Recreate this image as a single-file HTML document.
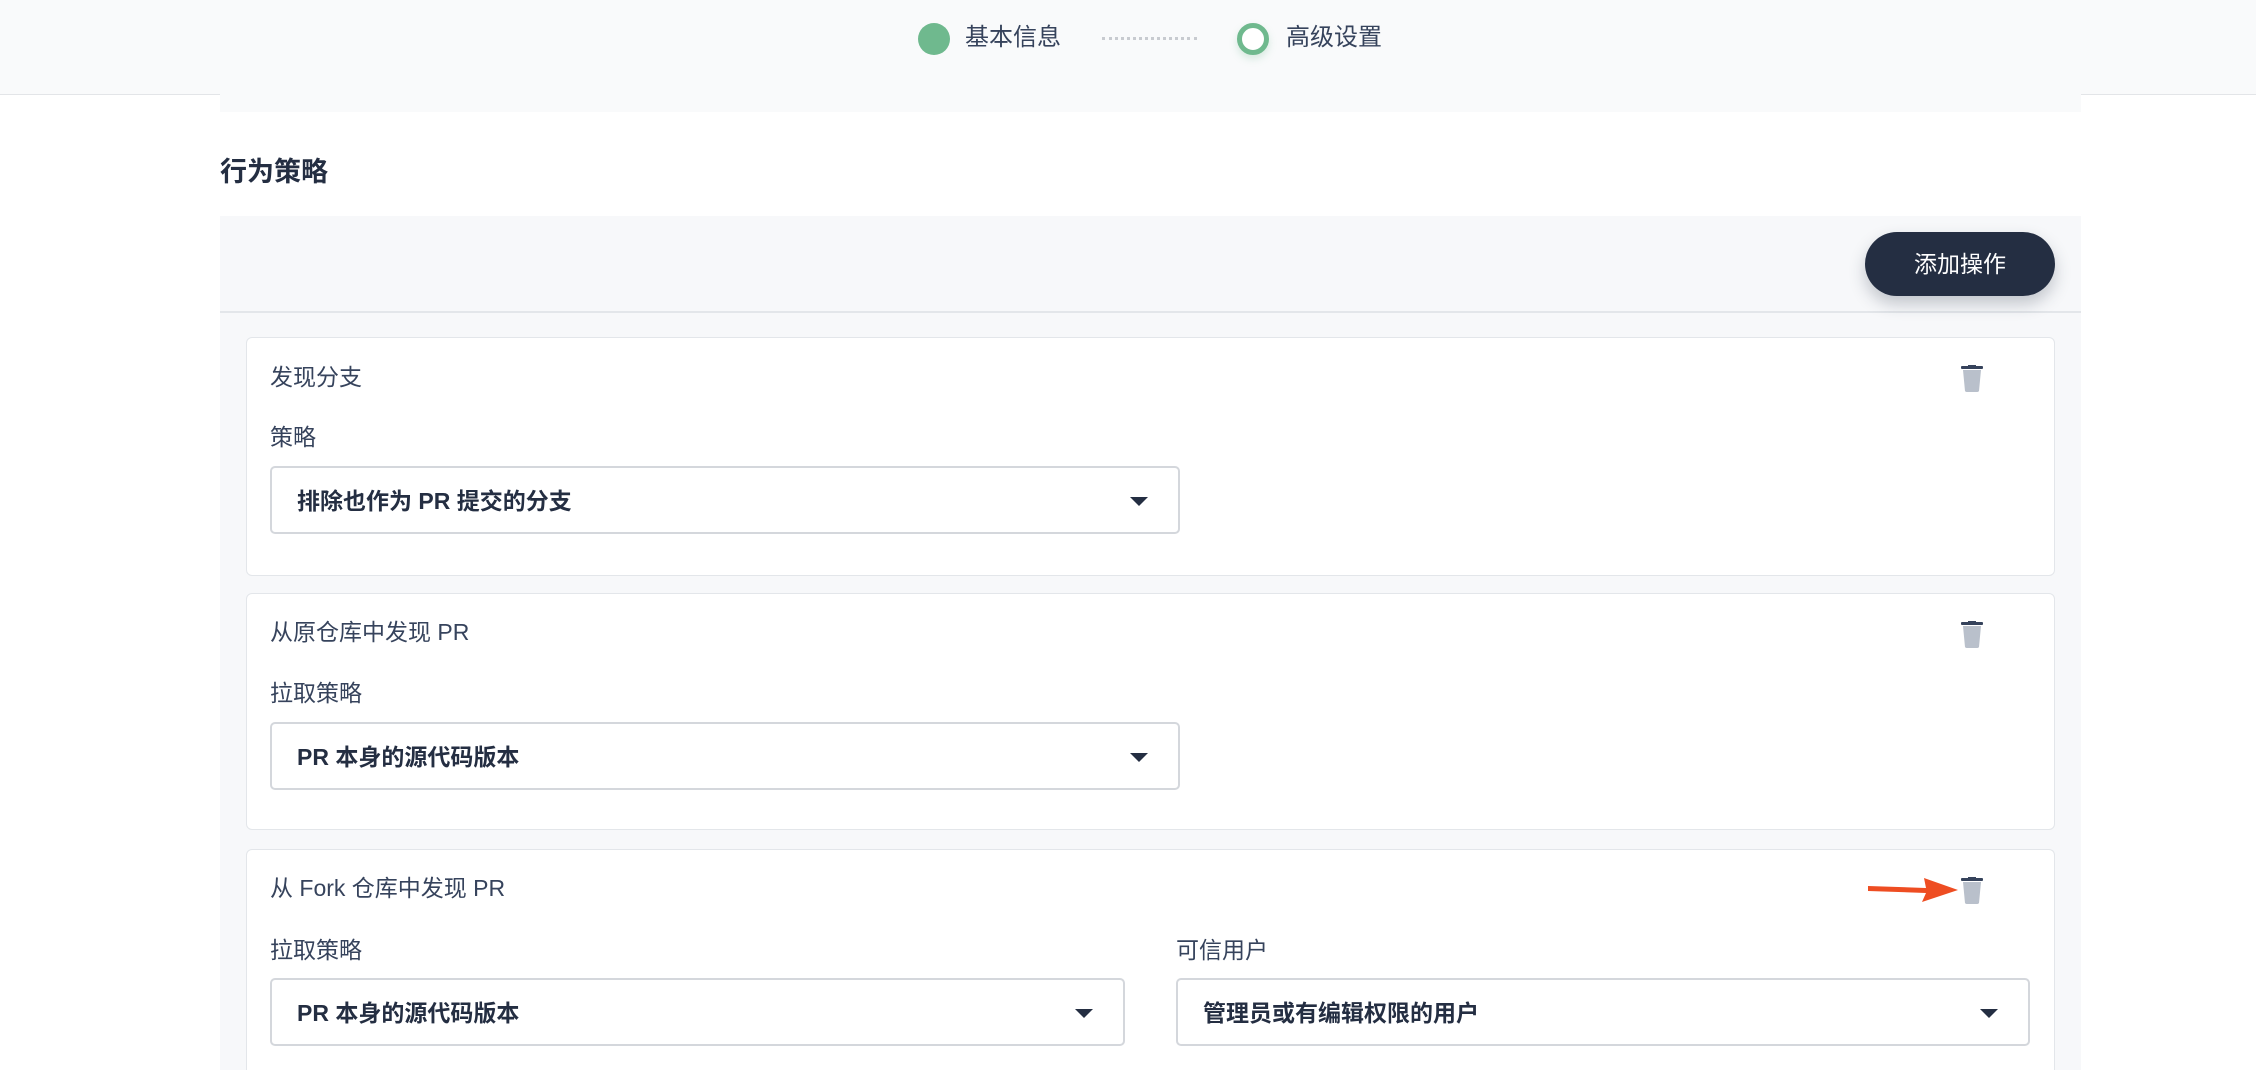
<!DOCTYPE html>
<html><head><meta charset="utf-8"><style>
*{margin:0;padding:0;box-sizing:border-box}
html,body{width:2256px;height:1070px;overflow:hidden}
body{background:#fff;position:relative;font-family:"Liberation Sans","Noto Sans CJK SC",sans-serif;color:#36435c}
.a{position:absolute}
.hdr{left:0;top:0;width:2256px;height:95px;background:#f9fafb;border-bottom:1px solid #e3e5e8}
.hpan{left:220px;top:0;width:1861px;height:112px;background:#f9fafb}
.t{font-size:23px;line-height:23px;white-space:nowrap}
.card{background:#fff;border:1px solid #e3e6ea;border-radius:6px;left:246px;width:1809px}
.sel{border:2px solid #d4d7dc;border-radius:5px;background:#fff;height:68px}
.sel span{position:absolute;left:25px;top:22px;font-size:23px;font-weight:bold;color:#242e42;white-space:nowrap;line-height:23px}
.caret{position:absolute;top:29px;width:0;height:0;border-left:9px solid transparent;border-right:9px solid transparent;border-top:9px solid #242e42}
</style></head><body>
<div class="a hdr"></div>
<div class="a hpan"></div>
<div class="a" style="left:918px;top:23px;width:32px;height:32px;border-radius:50%;background:#6fb98e"></div>
<div class="a t" style="left:965px;top:26px;font-size:24px;color:#36435c">基本信息</div>
<div class="a" style="left:1102px;top:37px;width:95px;border-top:3px dotted #c8cbd0"></div>
<div class="a" style="left:1237px;top:23px;width:32px;height:32px;border-radius:50%;border:5px solid #6fb98e;background:#fff;box-shadow:0 4px 8px rgba(111,185,142,.25)"></div>
<div class="a t" style="left:1286px;top:26px;font-size:24px">高级设置</div>

<div class="a" style="left:220px;top:159px;font-size:27px;font-weight:bold;color:#242e42;line-height:27px">行为策略</div>

<div class="a" style="left:220px;top:216px;width:1861px;height:854px;background:#f7f8fa"></div>
<div class="a" style="left:220px;top:311px;width:1861px;border-top:2px solid #e3e6ea"></div>
<div class="a" style="left:1865px;top:232px;width:190px;height:64px;border-radius:32px;background:#242e42;box-shadow:0 8px 16px rgba(36,46,66,.25);color:#fff;font-size:23px;line-height:64px;text-align:center">添加操作</div>

<div class="a card" style="top:337px;height:239px"></div>
<div class="a t" style="left:270px;top:366px">发现分支</div>
<div class="a t" style="left:270px;top:426px">策略</div>
<div class="a sel" style="left:270px;top:466px;width:910px"><span>排除也作为 PR 提交的分支</span><div class="caret" style="left:858px"></div></div>

<div class="a card" style="top:593px;height:237px"></div>
<div class="a t" style="left:270px;top:621px">从原仓库中发现 PR</div>
<div class="a t" style="left:270px;top:682px">拉取策略</div>
<div class="a sel" style="left:270px;top:722px;width:910px"><span>PR 本身的源代码版本</span><div class="caret" style="left:858px"></div></div>

<div class="a card" style="top:849px;height:221px;border-bottom:none;border-radius:6px 6px 0 0"></div>
<div class="a t" style="left:270px;top:877px">从 Fork 仓库中发现 PR</div>
<div class="a t" style="left:270px;top:939px">拉取策略</div>
<div class="a sel" style="left:270px;top:978px;width:855px"><span>PR 本身的源代码版本</span><div class="caret" style="left:803px"></div></div>
<div class="a t" style="left:1176px;top:939px">可信用户</div>
<div class="a sel" style="left:1176px;top:978px;width:854px"><span>管理员或有编辑权限的用户</span><div class="caret" style="left:802px"></div></div>

<svg class="a" style="left:1960px;top:365px" width="24" height="28" viewBox="0 0 24 28"><rect x="1" y="1" width="22" height="3" rx="1" fill="#36435c"/><rect x="8" y="0" width="8" height="2" fill="#36435c"/><path d="M3 5h18l-2 21a2 2 0 0 1-2 1H7a2 2 0 0 1-2-1z" fill="#b9c0cb"/></svg>
<svg class="a" style="left:1960px;top:621px" width="24" height="28" viewBox="0 0 24 28"><rect x="1" y="1" width="22" height="3" rx="1" fill="#36435c"/><rect x="8" y="0" width="8" height="2" fill="#36435c"/><path d="M3 5h18l-2 21a2 2 0 0 1-2 1H7a2 2 0 0 1-2-1z" fill="#b9c0cb"/></svg>
<svg class="a" style="left:1960px;top:877px" width="24" height="28" viewBox="0 0 24 28"><rect x="1" y="1" width="22" height="3" rx="1" fill="#36435c"/><rect x="8" y="0" width="8" height="2" fill="#36435c"/><path d="M3 5h18l-2 21a2 2 0 0 1-2 1H7a2 2 0 0 1-2-1z" fill="#b9c0cb"/></svg>

<svg class="a" style="left:1864px;top:874px" width="96" height="34" viewBox="0 0 96 34"><path d="M4 12 L62 14 L60 4 L94 16 L58 28 L62 19 L4 17 Z" fill="#ee4d22"/></svg>
</body></html>
